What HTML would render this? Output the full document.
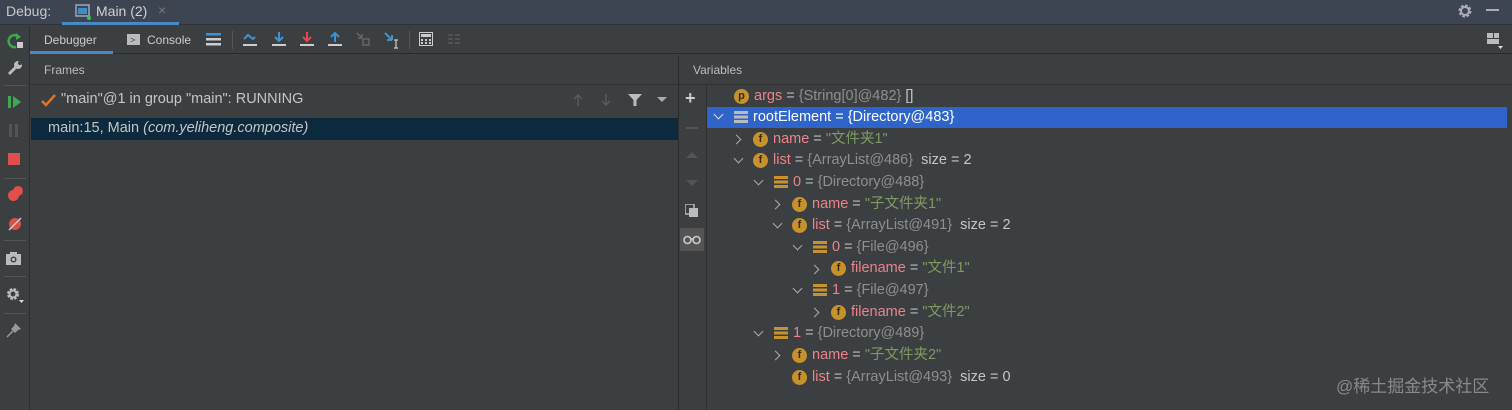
<!DOCTYPE html>
<html><head><meta charset="utf-8"><style>
*{margin:0;padding:0;box-sizing:border-box}
body{width:1512px;height:410px;overflow:hidden;background:#3c3f41;font-family:"Liberation Sans","Noto Sans CJK SC",sans-serif;font-size:14px;color:#bbbbbb;position:relative}
.a{position:absolute}
.title{left:0;top:0;width:1512px;height:25px;background:#3d4552;border-bottom:1px solid #2f3338}
.tb{left:30px;top:26px;width:1482px;height:28px;border-bottom:1px solid #2b2b2b;background:#3c3f41}
.lbar{left:0;top:26px;width:30px;height:384px;border-right:1px solid #2e2e2e;background:#3c3f41}
.hdr{top:55px;height:30px;border-bottom:1px solid #2f2f2f;font-size:12px;line-height:30px;color:#bbb}
.row{position:absolute;height:21px;line-height:21px;white-space:nowrap;font-size:14.5px}
.n{color:#ed8289}.v{color:#8e8e8e}.s{color:#7f9a61}.w{color:#c5c5c5}
.ic{display:inline-block;width:15px;height:15px;border-radius:50%;background:#c6922e;color:#3a2a10;font-size:11px;line-height:15px;text-align:center;vertical-align:top;margin-top:3px;margin-right:5px;font-weight:bold}
.lst{display:inline-block;width:14px;height:12px;vertical-align:top;margin-top:4px;margin-right:5px;background:linear-gradient(#c6922e 0 3px,transparent 3px 4.5px,#c6922e 4.5px 7.5px,transparent 7.5px 9px,#c6922e 9px 12px)}
.ar{position:absolute;width:7px;height:7px;border-right:1.5px solid #aaa;border-bottom:1.5px solid #aaa}
.dn{transform:rotate(45deg)}
.rt{transform:rotate(-45deg)}
.sep{position:absolute;width:1px;height:18px;background:#555;top:31px}
</style></head><body>
<div class="a title"></div>
<div class="a" style="left:6px;top:3px;font-size:14px;color:#c8c8c8">Debug:</div>
<svg class="a" style="left:75px;top:4px" width="16" height="16"><rect x="1" y="1" width="13" height="11" fill="none" stroke="#9ab" stroke-width="1.5"/><rect x="3" y="4" width="9" height="6" fill="#3d8fc6"/><circle cx="14" cy="14" r="2" fill="#3cc14a"/></svg>
<div class="a" style="left:96px;top:3px;font-size:14px;color:#d0d0d0">Main (2)</div>
<div class="a" style="left:158px;top:2px;font-size:14px;color:#777">×</div>
<div class="a" style="left:62px;top:22px;width:117px;height:3px;background:#4a88c7"></div>
<svg class="a" style="left:1456px;top:2px" width="18" height="18" viewBox="0 0 18 18"><circle cx="9" cy="9" r="5" fill="none" stroke="#aab" stroke-width="3" stroke-dasharray="2.5 1.4"/><circle cx="9" cy="9" r="4" fill="none" stroke="#aab" stroke-width="2"/></svg>
<div class="a" style="left:1486px;top:9px;width:13px;height:2px;background:#aab"></div>

<div class="a lbar"></div>
<div class="a tb"></div>
<div class="a" style="left:44px;top:33px;font-size:12px;color:#ccc">Debugger</div>
<div class="a" style="left:30px;top:51px;width:83px;height:3px;background:#4a88c7"></div>
<div class="a" style="left:127px;top:34px;width:13px;height:11px;background:#bbb"></div>
<div class="a" style="left:130px;top:35px;color:#3c3f41;font-size:9px">&gt;</div>
<div class="a" style="left:147px;top:33px;font-size:12px;color:#ccc">Console</div>
<svg class="a" style="left:206px;top:32px" width="16" height="14"><rect y="1" width="15" height="2.5" fill="#3a95d5"/><rect y="6" width="15" height="2.5" fill="#ccc"/><rect y="11" width="15" height="2.5" fill="#ccc"/></svg>
<div class="sep" style="left:232px"></div>
<svg class="a" style="left:242px;top:31px" width="16" height="16"><path d="M2 8 L6 4 L11 8 L13 6" fill="none" stroke="#3a95d5" stroke-width="2"/><rect x="1" y="13" width="14" height="2" fill="#ccc"/></svg>
<svg class="a" style="left:271px;top:31px" width="16" height="16"><path d="M8 1v8M4 6l4 4 4-4" fill="none" stroke="#3a95d5" stroke-width="2"/><rect x="1" y="13" width="14" height="2" fill="#ccc"/></svg>
<svg class="a" style="left:299px;top:31px" width="16" height="16"><path d="M8 1v8M4 6l4 4 4-4" fill="none" stroke="#e2494f" stroke-width="2"/><rect x="1" y="13" width="14" height="2" fill="#ccc"/></svg>
<svg class="a" style="left:327px;top:31px" width="16" height="16"><path d="M8 11V3M4 6l4-4 4 4" fill="none" stroke="#3a95d5" stroke-width="2"/><rect x="1" y="13" width="14" height="2" fill="#ccc"/></svg>
<svg class="a" style="left:355px;top:31px" width="16" height="16"><path d="M2 2l5 5M7 7h-4M7 7v-4M8 8h6v6h-6z" fill="none" stroke="#666" stroke-width="1.5"/></svg>
<svg class="a" style="left:383px;top:31px" width="18" height="18"><path d="M2 2l7 7M9 9h-5M9 9V4" fill="none" stroke="#3a95d5" stroke-width="2"/><path d="M13 9v8M11 9h4M11 17h4" stroke="#ccc" stroke-width="1.2"/></svg>
<div class="sep" style="left:409px"></div>
<svg class="a" style="left:419px;top:32px" width="14" height="14"><rect x="0.5" y="0.5" width="13" height="13" fill="none" stroke="#ccc"/><rect x="2" y="2" width="10" height="3" fill="#ccc"/><path d="M2 7h2v2H2zM6 7h2v2H6zM10 7h2v2h-2zM2 10h2v2H2zM6 10h2v2H6zM10 10h2v2h-2z" fill="#ccc"/></svg>
<svg class="a" style="left:447px;top:32px" width="14" height="14"><path d="M1 3h5M1 7h5M1 11h5M8 3h5M8 7h5M8 11h5" stroke="#5a5a5a" stroke-width="1.5"/></svg>
<svg class="a" style="left:1486px;top:32px" width="18" height="18"><rect x="1" y="1" width="6" height="5" fill="#bbb"/><rect x="8" y="1" width="5" height="5" fill="#bbb"/><rect x="1" y="7" width="12" height="5" fill="#bbb"/><path d="M12 14h5l-2.5 3z" fill="#ddd"/></svg>

<svg class="a" style="left:7px;top:32px" width="18" height="18"><path d="M12 5A6 6 0 1 0 9 15" fill="none" stroke="#3ea84e" stroke-width="2.5"/><path d="M9 1l5 4-5 3z" fill="#3ea84e"/><rect x="10" y="10" width="6" height="6" fill="#ccc"/></svg>
<svg class="a" style="left:7px;top:60px" width="16" height="16"><path d="M2 14l7-7" stroke="#bbb" stroke-width="3"/><circle cx="11" cy="5" r="4" fill="#bbb"/><circle cx="13" cy="3" r="2" fill="#3c3f41"/></svg>
<div class="a" style="left:4px;top:85px;width:22px;height:1px;background:#555"></div>
<svg class="a" style="left:8px;top:95px" width="14" height="14"><rect x="0" y="1" width="3" height="12" fill="#3ea84e"/><path d="M5 1l8 6-8 6z" fill="#3ea84e"/></svg>
<svg class="a" style="left:9px;top:124px" width="12" height="13"><rect x="0" y="0" width="3" height="13" fill="#555"/><rect x="6" y="0" width="3" height="13" fill="#555"/></svg>
<div class="a" style="left:8px;top:153px;width:12px;height:12px;background:#e0504a"></div>
<div class="a" style="left:4px;top:178px;width:22px;height:1px;background:#555"></div>
<div class="a" style="left:8px;top:190px;width:11px;height:11px;border-radius:50%;background:#e0504a"></div>
<div class="a" style="left:13px;top:186px;width:10px;height:10px;border-radius:50%;background:#e0504a"></div>
<svg class="a" style="left:7px;top:216px" width="16" height="16"><circle cx="8" cy="8" r="6" fill="#d9504a"/><path d="M2 14L14 2" stroke="#ccc" stroke-width="1.5"/></svg>
<div class="a" style="left:4px;top:240px;width:22px;height:1px;background:#555"></div>
<svg class="a" style="left:6px;top:251px" width="16" height="14"><rect x="0" y="3" width="15" height="11" fill="#bbb"/><rect x="4" y="1" width="7" height="3" fill="#bbb"/><circle cx="7.5" cy="8.5" r="3" fill="#3c3f41"/><circle cx="7.5" cy="8.5" r="1.6" fill="#bbb"/></svg>
<div class="a" style="left:4px;top:276px;width:22px;height:1px;background:#555"></div>
<svg class="a" style="left:6px;top:287px" width="18" height="18"><circle cx="7" cy="7" r="4.5" fill="none" stroke="#bbb" stroke-width="3" stroke-dasharray="2.3 1.3"/><circle cx="7" cy="7" r="3.5" fill="none" stroke="#bbb" stroke-width="2"/><path d="M13 13h5l-2.5 3z" fill="#ddd"/></svg>
<div class="a" style="left:4px;top:313px;width:22px;height:1px;background:#555"></div>
<svg class="a" style="left:6px;top:322px" width="16" height="16"><path d="M1 15l6-6" stroke="#999" stroke-width="1.5"/><path d="M9 1l6 6-3 1-3 3-4-4 3-3z" fill="#999"/></svg>

<div class="a hdr" style="left:31px;width:647px;padding-left:13px">Frames</div>
<div class="a" style="left:678px;top:55px;width:1px;height:355px;background:#2b2b2b"></div>
<svg class="a" style="left:41px;top:94px" width="15" height="13"><path d="M1 7l4 4 9-10" fill="none" stroke="#e07030" stroke-width="2.5"/></svg>
<div class="a" style="left:61px;top:91px;color:#c5c5c5;font-size:14.5px">"main"@1 in group "main": RUNNING</div>
<svg class="a" style="left:572px;top:93px" width="12" height="14"><path d="M6 13V2M2 6l4-4 4 4" fill="none" stroke="#5a5a5a" stroke-width="1.5"/></svg>
<svg class="a" style="left:600px;top:93px" width="12" height="14"><path d="M6 1v11M2 8l4 4 4-4" fill="none" stroke="#5a5a5a" stroke-width="1.5"/></svg>
<svg class="a" style="left:628px;top:93px" width="14" height="14"><path d="M0 1h14L8.5 7v6h-3V7z" fill="#bbb"/></svg>
<svg class="a" style="left:657px;top:97px" width="10" height="6"><path d="M0 0h10L5 5z" fill="#aaa"/></svg>
<div class="a" style="left:31px;top:118px;width:647px;height:22px;background:#0d293e"></div>
<div class="a" style="left:48px;top:120px;color:#c5c5c5;font-size:14.5px">main:15, Main <i>(com.yeliheng.composite)</i></div>

<div class="a hdr" style="left:679px;width:833px;padding-left:14px">Variables</div>
<div class="a" style="left:706px;top:86px;width:1px;height:324px;background:#2e2e2e"></div>
<div class="a" style="left:685px;top:88px;color:#ccc;font-size:18px;font-weight:bold">+</div>
<div class="a" style="left:686px;top:127px;width:12px;height:2px;background:#555"></div>
<svg class="a" style="left:686px;top:151px" width="12" height="8"><path d="M0 7L6 1l6 6z" fill="#555"/></svg>
<svg class="a" style="left:686px;top:179px" width="12" height="8"><path d="M0 1h12L6 7z" fill="#555"/></svg>
<svg class="a" style="left:685px;top:204px" width="14" height="14"><rect x="0" y="0" width="9" height="10" fill="none" stroke="#bbb" stroke-width="1.5"/><rect x="4" y="4" width="9" height="9" fill="#bbb"/></svg>
<div class="a" style="left:680px;top:228px;width:24px;height:23px;background:#555;border-radius:2px"></div>
<svg class="a" style="left:683px;top:235px" width="18" height="10"><circle cx="4.5" cy="5" r="3.5" fill="none" stroke="#ccc" stroke-width="1.6"/><circle cx="13.5" cy="5" r="3.5" fill="none" stroke="#ccc" stroke-width="1.6"/><path d="M8 4h2" stroke="#ccc" stroke-width="1.5"/></svg>

<div class="a" style="left:707px;top:107px;width:800px;height:21px;background:#2f65ca"></div>

<div class="row" style="left:734px;top:86px"><span class="ic">p</span><span class="n">args</span> = <span class="v">{String[0]@482}</span> <span class="w">[]</span></div>
<div class="ar dn" style="left:715px;top:111px;border-color:#ddd"></div>
<div class="row" style="left:734px;top:107px;color:#fff"><span class="lst" style="background:linear-gradient(#bbb 0 3px,transparent 3px 4.5px,#bbb 4.5px 7.5px,transparent 7.5px 9px,#bbb 9px 12px)"></span>rootElement = {Directory@483}</div>

<div class="ar rt" style="left:733px;top:136px"></div>
<div class="row" style="left:753px;top:129px"><span class="ic">f</span><span class="n">name</span> = <span class="s">"文件夹1"</span></div>
<div class="ar dn" style="left:735px;top:155px"></div>
<div class="row" style="left:753px;top:150px"><span class="ic">f</span><span class="n">list</span> = <span class="v">{ArrayList@486}</span>&nbsp; <span class="w">size = 2</span></div>
<div class="ar dn" style="left:755px;top:177px"></div>
<div class="row" style="left:774px;top:172px"><span class="lst"></span><span class="n">0</span> = <span class="v">{Directory@488}</span></div>
<div class="ar rt" style="left:772px;top:201px"></div>
<div class="row" style="left:792px;top:194px"><span class="ic">f</span><span class="n">name</span> = <span class="s">"子文件夹1"</span></div>
<div class="ar dn" style="left:774px;top:220px"></div>
<div class="row" style="left:792px;top:215px"><span class="ic">f</span><span class="n">list</span> = <span class="v">{ArrayList@491}</span>&nbsp; <span class="w">size = 2</span></div>
<div class="ar dn" style="left:794px;top:242px"></div>
<div class="row" style="left:813px;top:237px"><span class="lst"></span><span class="n">0</span> = <span class="v">{File@496}</span></div>
<div class="ar rt" style="left:811px;top:266px"></div>
<div class="row" style="left:831px;top:258px"><span class="ic">f</span><span class="n">filename</span> = <span class="s">"文件1"</span></div>
<div class="ar dn" style="left:794px;top:285px"></div>
<div class="row" style="left:813px;top:280px"><span class="lst"></span><span class="n">1</span> = <span class="v">{File@497}</span></div>
<div class="ar rt" style="left:811px;top:309px"></div>
<div class="row" style="left:831px;top:302px"><span class="ic">f</span><span class="n">filename</span> = <span class="s">"文件2"</span></div>
<div class="ar dn" style="left:755px;top:328px"></div>
<div class="row" style="left:774px;top:323px"><span class="lst"></span><span class="n">1</span> = <span class="v">{Directory@489}</span></div>
<div class="ar rt" style="left:772px;top:352px"></div>
<div class="row" style="left:792px;top:345px"><span class="ic">f</span><span class="n">name</span> = <span class="s">"子文件夹2"</span></div>
<div class="row" style="left:792px;top:367px"><span class="ic">f</span><span class="n">list</span> = <span class="v">{ArrayList@493}</span>&nbsp; <span class="w">size = 0</span></div>

<div class="a" style="left:1336px;top:372px;font-size:17px;color:#8a8a8a">@稀土掘金技术社区</div>
</body></html>
